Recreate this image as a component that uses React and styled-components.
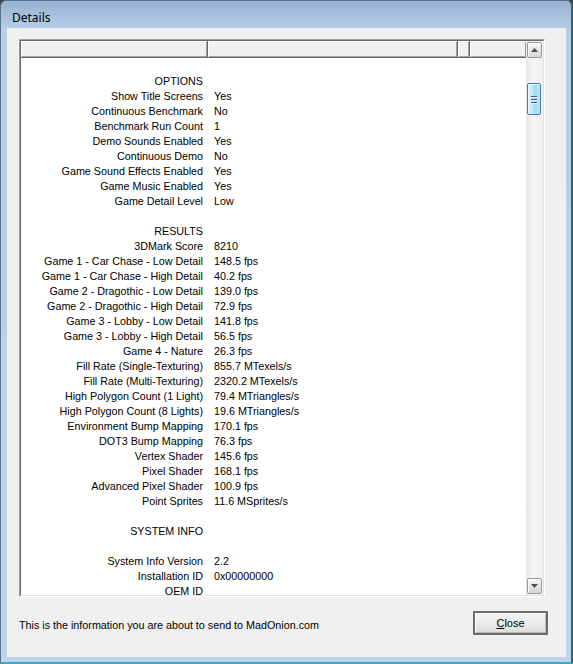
import React from 'react';
import styled, { createGlobalStyle } from 'styled-components';

const GlobalStyle = createGlobalStyle`
    html, body {
        margin: 0;
        padding: 0;
        background: #3b3f44;
    }
    body {
        font-family: "Liberation Sans", Arial, sans-serif;
        font-size: 10.75px;
        color: #000;
    }
`;

const Window = styled.div`
    box-sizing: border-box;
    width: 573px;
    height: 664px;
    display: flex;
    flex-direction: column;
    border-top: 1px solid #5c738c;
    border-left: 1px solid #5c738c;
    border-right: 2px solid #2d6670;
    border-bottom: 2px solid #3aa9b8;
    border-radius: 6px 6px 0 0;
    background: linear-gradient(to bottom, #98b2d1 0px, #b7cfe9 30px, #bdd4ee 100%);
    padding: 0 5px 5px 6px;
`;

const TitleBar = styled.div`
    height: 27px;
    flex: none;
    display: flex;
    align-items: center;
    padding: 5px 0 0 5px;
    box-sizing: border-box;
    font-family: "Noto Sans", "Liberation Sans", sans-serif;
    font-size: 12px;
    color: #000;
`;

const Client = styled.div`
    flex: 1;
    background: #f0f0f0;
    display: flex;
    flex-direction: column;
    padding: 11px 0 0 12px;
    box-sizing: border-box;
`;

const ListBox = styled.div`
    box-sizing: border-box;
    width: 526px;
    height: 558px;
    border: 1px solid;
    border-color: #a0a0a0 #ffffff #ffffff #a0a0a0;
    display: flex;
`;

const ListInner = styled.div`
    flex: 1;
    display: flex;
    border: 1px solid;
    border-color: #696969 #e3e3e3 #e3e3e3 #696969;
    background: #fff;
    overflow: hidden;
`;

const Main = styled.div`
    flex: 1;
    display: flex;
    flex-direction: column;
    min-width: 0;
`;

const Header = styled.div`
    display: flex;
    height: 17px;
    flex: none;
`;

const HeaderCell = styled.div`
    box-sizing: border-box;
    width: ${p => p.$w ? `${p.$w}px` : 'auto'};
    flex: ${p => p.$w ? 'none' : '1'};
    background: #f0f0f0;
    border-right: ${p => p.$last ? 'none' : '1px solid #696969'};
    border-bottom: 1px solid #696969;
    box-shadow: inset 1px 1px 0 #ffffff, inset -1px -1px 0 #a0a0a0;
`;

const Body = styled.div`
    flex: 1;
    overflow: hidden;
    padding-top: 1px;
`;

const Row = styled.div`
    display: flex;
    height: 15px;
    line-height: 15px;
    white-space: nowrap;
`;

const Label = styled.div`
    width: 187px;
    flex: none;
    box-sizing: border-box;
    text-align: right;
    padding-right: 5px;
`;

const Value = styled.div`
    padding-left: 6px;
`;

const ScrollBar = styled.div`
    width: 16px;
    flex: none;
    display: flex;
    flex-direction: column;
    background: linear-gradient(to right, #e6e6e6, #f4f4f4 40%, #f0f0f0);
    padding-left: 1px;
`;

const ArrowButton = styled.div`
    box-sizing: border-box;
    width: 15px;
    height: 16px;
    flex: none;
    margin: ${p => p.$down ? '0 0 1px 0' : '1px 0 0 0'};
    border: 1px solid #9a9a9a;
    border-radius: 2px;
    background: linear-gradient(to bottom, #f8f8f8, #e4e4e4 50%, #d6d6d6);
    box-shadow: inset 1px 1px 0 #ffffff;
    display: flex;
    align-items: center;
    justify-content: center;
`;

const Track = styled.div`
    flex: 1;
    display: flex;
    flex-direction: column;
    padding-top: 25px;
`;

const Thumb = styled.div`
    box-sizing: border-box;
    width: 14px;
    height: 32px;
    border: 1px solid #3c7fb1;
    border-radius: 2px;
    background: linear-gradient(to right, #d9f0fb, #bfe6fa 45%, #a7d9f5 55%, #bfe4f7);
    box-shadow: inset 1px 1px 0 #effaff;
    display: flex;
    flex-direction: column;
    align-items: center;
    justify-content: center;
    gap: 2px;
`;

const Grip = styled.span`
    display: block;
    width: 6px;
    height: 1px;
    background: #2f5f86;
    box-shadow: 0 1px 0 #e8f7ff;
`;

const Footer = styled.div`
    flex: 1;
    display: flex;
    align-items: flex-start;
    justify-content: space-between;
    padding: 14px 18px 0 0;
`;

const FooterText = styled.div`
    margin-top: 8px;
    line-height: 13px;
`;

const Button = styled.button`
    box-sizing: border-box;
    width: 75px;
    height: 24px;
    border: 2px solid #6b6b6b;
    border-radius: 1px;
    background: linear-gradient(to bottom, #f4f4f4, #ebebeb 50%, #dddddd);
    box-shadow: inset 1px 1px 0 #ffffff, inset -1px -1px 0 #b8b8b8;
    font-family: "Liberation Sans", Arial, sans-serif;
    font-size: 11px;
    color: #000;
    padding: 0;
    cursor: pointer;

    u {
        text-underline-offset: 1px;
    }
`;

const rows = [
    null,
    ['OPTIONS'],
    ['Show Title Screens', 'Yes'],
    ['Continuous Benchmark', 'No'],
    ['Benchmark Run Count', '1'],
    ['Demo Sounds Enabled', 'Yes'],
    ['Continuous Demo', 'No'],
    ['Game Sound Effects Enabled', 'Yes'],
    ['Game Music Enabled', 'Yes'],
    ['Game Detail Level', 'Low'],
    null,
    ['RESULTS'],
    ['3DMark Score', '8210'],
    ['Game 1 - Car Chase - Low Detail', '148.5 fps'],
    ['Game 1 - Car Chase - High Detail', '40.2 fps'],
    ['Game 2 - Dragothic - Low Detail', '139.0 fps'],
    ['Game 2 - Dragothic - High Detail', '72.9 fps'],
    ['Game 3 - Lobby - Low Detail', '141.8 fps'],
    ['Game 3 - Lobby - High Detail', '56.5 fps'],
    ['Game 4 - Nature', '26.3 fps'],
    ['Fill Rate (Single-Texturing)', '855.7 MTexels/s'],
    ['Fill Rate (Multi-Texturing)', '2320.2 MTexels/s'],
    ['High Polygon Count (1 Light)', '79.4 MTriangles/s'],
    ['High Polygon Count (8 Lights)', '19.6 MTriangles/s'],
    ['Environment Bump Mapping', '170.1 fps'],
    ['DOT3 Bump Mapping', '76.3 fps'],
    ['Vertex Shader', '145.6 fps'],
    ['Pixel Shader', '168.1 fps'],
    ['Advanced Pixel Shader', '100.9 fps'],
    ['Point Sprites', '11.6 MSprites/s'],
    null,
    ['SYSTEM INFO'],
    null,
    ['System Info Version', '2.2'],
    ['Installation ID', '0x00000000'],
    ['OEM ID', ''],
];

function Arrow({ down }) {
    return (
        <svg width="7" height="4" viewBox="0 0 7 4">
            <path d={down ? 'M0 0 H7 L3.5 4 Z' : 'M0 4 H7 L3.5 0 Z'} fill="#4d4d4d" />
        </svg>
    );
}

export default function App() {
    return (
        <>
            <GlobalStyle />
            <Window>
                <TitleBar>Details</TitleBar>
                <Client>
                    <ListBox>
                        <ListInner>
                            <Main>
                                <Header>
                                    <HeaderCell $w={187} />
                                    <HeaderCell $w={250} />
                                    <HeaderCell $w={12} />
                                    <HeaderCell $last />
                                </Header>
                                <Body>
                                    {rows.map((r, i) => (
                                        <Row key={i}>
                                            <Label>{r ? r[0] : ''}</Label>
                                            <Value>{r && r[1] ? r[1] : ''}</Value>
                                        </Row>
                                    ))}
                                </Body>
                            </Main>
                            <ScrollBar>
                                <ArrowButton><Arrow /></ArrowButton>
                                <Track>
                                    <Thumb>
                                        <Grip /><Grip /><Grip />
                                    </Thumb>
                                </Track>
                                <ArrowButton $down><Arrow down /></ArrowButton>
                            </ScrollBar>
                        </ListInner>
                    </ListBox>
                    <Footer>
                        <FooterText>This is the information you are about to send to MadOnion.com</FooterText>
                        <Button><u>C</u>lose</Button>
                    </Footer>
                </Client>
            </Window>
        </>
    );
}
